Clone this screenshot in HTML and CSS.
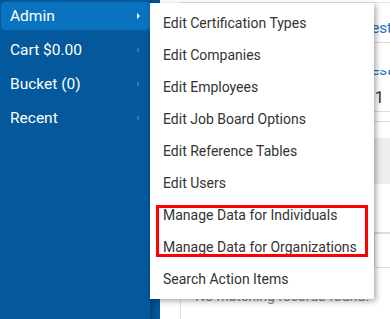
FILE: index.html
```html
<!DOCTYPE html>
<html lang="en">
<head>
    <meta charset="UTF-8">
    <meta name="viewport" content="width=device-width, initial-scale=1.0">
    <title>Admin menu</title>
    <link rel="stylesheet" href="styles.css">
</head>
<body>
    <div class="sidebar">
        <ul class="nav">
            <li class="nav-item active">
                <span>Admin</span><span class="arrow"></span>
                <div class="flyout">
                    <a class="flyout-item">Edit Certification Types</a>
                    <a class="flyout-item">Edit Companies</a>
                    <a class="flyout-item">Edit Employees</a>
                    <a class="flyout-item">Edit Job Board Options</a>
                    <a class="flyout-item">Edit Reference Tables</a>
                    <a class="flyout-item">Edit Users</a>
                    <div class="marked">
                        <a class="flyout-item">Manage Data for Individuals</a>
                        <a class="flyout-item">Manage Data for Organizations</a>
                    </div>
                    <a class="flyout-item">Search Action Items</a>
                </div>
            </li>
            <li class="nav-item"><span>Cart $0.00</span><span class="arrow"></span></li>
            <li class="nav-item"><span>Bucket (0)</span><span class="arrow"></span></li>
            <li class="nav-item"><span>Recent</span><span class="arrow"></span></li>
        </ul>
    </div>

    <div class="main">
        <div class="panel">
            <div class="row row-link"><a>Request</a></div>
            <div class="row row-count">
                <div class="peek"><span>Latest</span></div>
                <div class="count">1</div>
            </div>
            <div class="row row-thin"></div>
            <div class="band"></div>
            <div class="pager"><div class="pager-box"></div></div>
            <div class="empty">No matching records found.</div>
        </div>
    </div>
</body>
</html>
```

FILE: styles.css
```css
* {
    margin: 0;
    padding: 0;
    box-sizing: border-box;
    font-family: Roboto, "Liberation Sans", sans-serif;
}
html, body {
    width: 390px;
    height: 319px;
    overflow: hidden;
    background: #fff;
}
body {
    display: flex;
}

.sidebar {
    width: 160px;
    height: 100%;
    background: #03599c;
    flex-shrink: 0;
}
.nav {
    list-style: none;
    width: 150px;
    height: 100%;
    padding: 2px 0 0 1px;
    box-shadow: 2px 0 6px rgba(0, 0, 0, 0.35);
}
.nav-item {
    position: relative;
    height: 28px;
    margin-bottom: 6px;
    padding: 0 10px 0 9px;
    display: flex;
    align-items: center;
    justify-content: space-between;
    border-radius: 4px;
    color: #fff;
    font-size: 15.5px;
}
.nav-item.active {
    background: #0a73bf;
}
.arrow {
    width: 0;
    height: 0;
    border-top: 3px solid transparent;
    border-bottom: 3px solid transparent;
    border-left: 3px solid #2a7fc2;
}
.active .arrow {
    border-left-color: #fff;
}

.flyout {
    position: absolute;
    left: 149px;
    top: 1px;
    width: 224px;
    padding: 4px 0 4px;
    background: #fff;
    box-shadow: 2px 2px 6px rgba(0, 0, 0, 0.35);
    z-index: 5;
}
.flyout-item {
    display: flex;
    align-items: center;
    height: 32px;
    padding-left: 13px;
    color: #333;
    font-size: 14px;
}
.marked {
    position: relative;
}
.marked::after {
    content: "";
    position: absolute;
    inset: 6px;
    border: 3px solid #f00;
}

.main {
    flex: 1;
    padding-left: 20px;
}
.panel {
    height: 100%;
    border-left: 1px solid #ddd;
    border-top: 1px solid #e4e4e4;
    margin-top: 2px;
}
.row {
    border-bottom: 1px solid #ddd;
    text-align: right;
}
.row-link {
    height: 40px;
    padding-top: 16px;
    font-size: 15px;
    margin-right: -2px;
}
.row-link a {
    color: #1a73c4;
}
.row-count {
    height: 69px;
    padding-top: 27px;
}
.peek {
    height: 8px;
    overflow: hidden;
    font-size: 15px;
    color: #1a73c4;
    margin-right: -2px;
}
.peek span {
    display: block;
    margin-top: -9px;
}
.count {
    margin-top: 9px;
    padding-right: 6px;
    font-size: 17px;
    color: #333;
}
.row-thin {
    height: 10px;
}
.band {
    height: 46px;
    margin-top: 16px;
    background: #eee;
}
.pager {
    margin-top: 48px;
    border-top: 1px solid #ddd;
    display: flex;
    justify-content: flex-end;
}
.pager-box {
    width: 16px;
    height: 35px;
    border: 1px solid #ddd;
    border-right: none;
}
.empty {
    margin-top: 20px;
    padding-left: 14px;
    font-size: 14px;
    color: #888;
}
```
